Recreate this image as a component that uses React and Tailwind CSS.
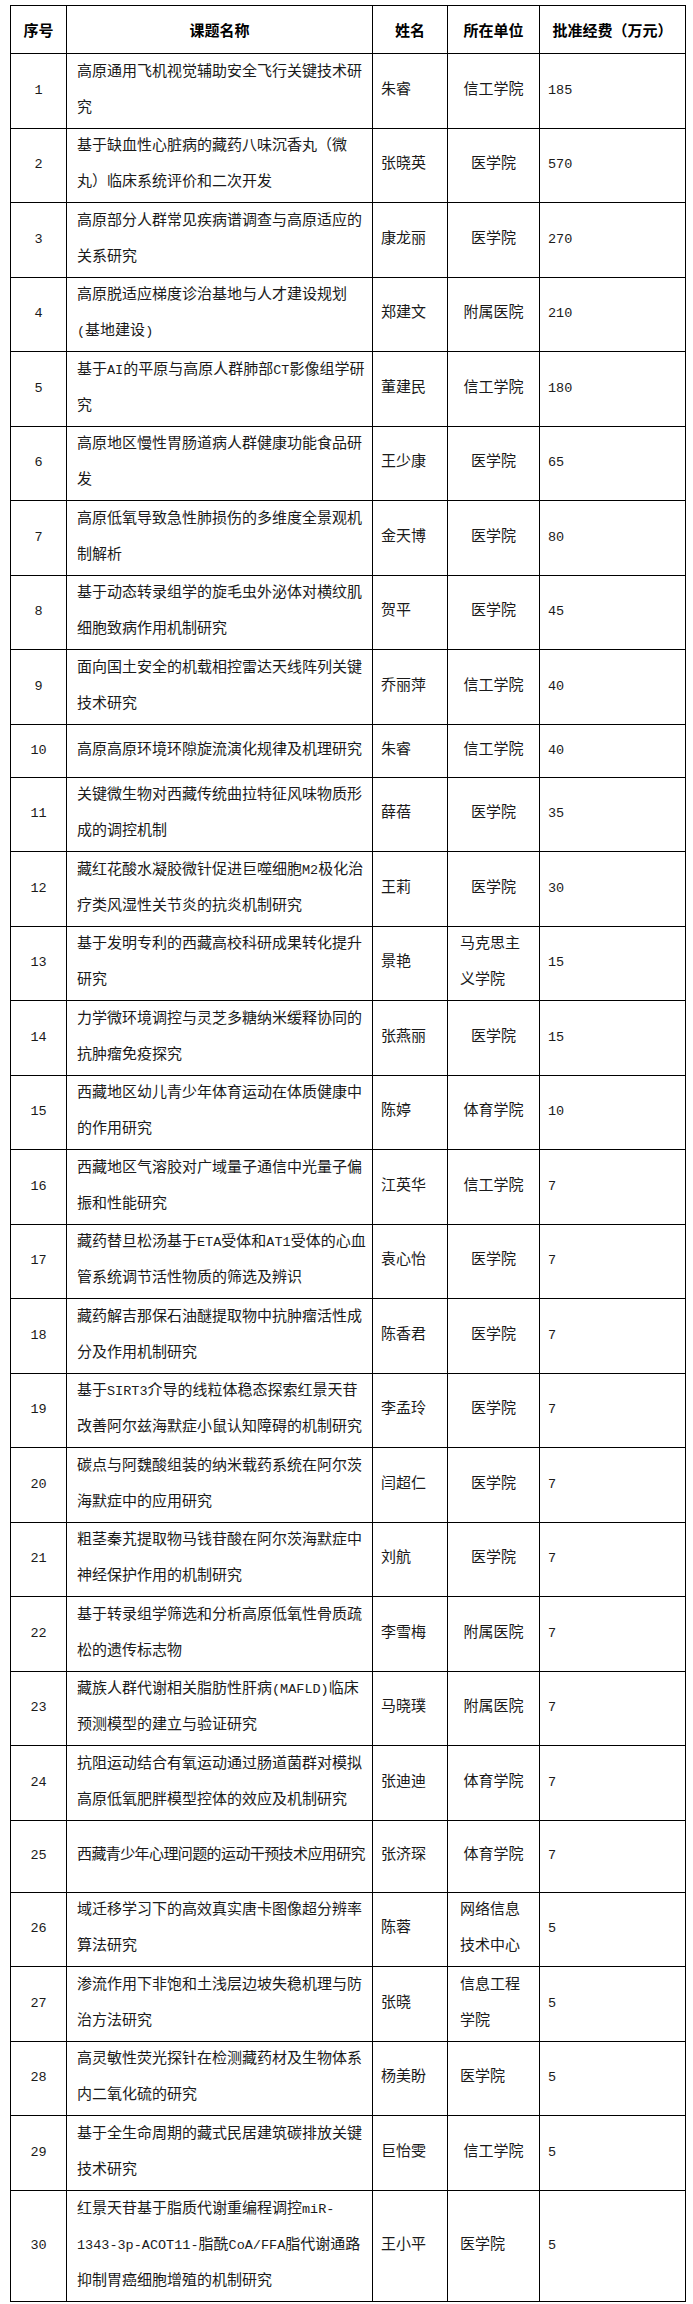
import React from "react";

const rows = [
  { n: 1, t: ["高原通用飞机视觉辅助安全飞行关键技术研", "究"], p: "朱睿", u: ["信工学院"], f: "185" },
  { n: 2, t: ["基于缺血性心脏病的藏药八味沉香丸（微", "丸）临床系统评价和二次开发"], p: "张晓英", u: ["医学院"], f: "570" },
  { n: 3, t: ["高原部分人群常见疾病谱调查与高原适应的", "关系研究"], p: "康龙丽", u: ["医学院"], f: "270" },
  { n: 4, t: ["高原脱适应梯度诊治基地与人才建设规划", "(基地建设)"], p: "郑建文", u: ["附属医院"], f: "210" },
  { n: 5, t: ["基于AI的平原与高原人群肺部CT影像组学研", "究"], p: "董建民", u: ["信工学院"], f: "180" },
  { n: 6, t: ["高原地区慢性胃肠道病人群健康功能食品研", "发"], p: "王少康", u: ["医学院"], f: "65" },
  { n: 7, t: ["高原低氧导致急性肺损伤的多维度全景观机", "制解析"], p: "金天博", u: ["医学院"], f: "80" },
  { n: 8, t: ["基于动态转录组学的旋毛虫外泌体对横纹肌", "细胞致病作用机制研究"], p: "贺平", u: ["医学院"], f: "45" },
  { n: 9, t: ["面向国土安全的机载相控雷达天线阵列关键", "技术研究"], p: "乔丽萍", u: ["信工学院"], f: "40" },
  { n: 10, t: ["高原高原环境环隙旋流演化规律及机理研究"], p: "朱睿", u: ["信工学院"], f: "40", h: "h-[53px]" },
  { n: 11, t: ["关键微生物对西藏传统曲拉特征风味物质形", "成的调控机制"], p: "薛蓓", u: ["医学院"], f: "35" },
  { n: 12, t: ["藏红花酸水凝胶微针促进巨噬细胞M2极化治", "疗类风湿性关节炎的抗炎机制研究"], p: "王莉", u: ["医学院"], f: "30" },
  { n: 13, t: ["基于发明专利的西藏高校科研成果转化提升", "研究"], p: "景艳", u: ["马克思主", "义学院"], f: "15", left: true },
  { n: 14, t: ["力学微环境调控与灵芝多糖纳米缓释协同的", "抗肿瘤免疫探究"], p: "张燕丽", u: ["医学院"], f: "15" },
  { n: 15, t: ["西藏地区幼儿青少年体育运动在体质健康中", "的作用研究"], p: "陈婷", u: ["体育学院"], f: "10" },
  { n: 16, t: ["西藏地区气溶胶对广域量子通信中光量子偏", "振和性能研究"], p: "江英华", u: ["信工学院"], f: "7" },
  { n: 17, t: ["藏药替旦松汤基于ETA受体和AT1受体的心血", "管系统调节活性物质的筛选及辨识"], p: "袁心怡", u: ["医学院"], f: "7" },
  { n: 18, t: ["藏药解吉那保石油醚提取物中抗肿瘤活性成", "分及作用机制研究"], p: "陈香君", u: ["医学院"], f: "7" },
  { n: 19, t: ["基于SIRT3介导的线粒体稳态探索红景天苷", "改善阿尔兹海默症小鼠认知障碍的机制研究"], p: "李孟玲", u: ["医学院"], f: "7" },
  { n: 20, t: ["碳点与阿魏酸组装的纳米载药系统在阿尔茨", "海默症中的应用研究"], p: "闫超仁", u: ["医学院"], f: "7" },
  { n: 21, t: ["粗茎秦艽提取物马钱苷酸在阿尔茨海默症中", "神经保护作用的机制研究"], p: "刘航", u: ["医学院"], f: "7" },
  { n: 22, t: ["基于转录组学筛选和分析高原低氧性骨质疏", "松的遗传标志物"], p: "李雪梅", u: ["附属医院"], f: "7" },
  { n: 23, t: ["藏族人群代谢相关脂肪性肝病(MAFLD)临床", "预测模型的建立与验证研究"], p: "马晓璞", u: ["附属医院"], f: "7" },
  { n: 24, t: ["抗阻运动结合有氧运动通过肠道菌群对模拟", "高原低氧肥胖模型控体的效应及机制研究"], p: "张迪迪", u: ["体育学院"], f: "7" },
  { n: 25, t: ["西藏青少年心理问题的运动干预技术应用研究"], p: "张济琛", u: ["体育学院"], f: "7", h: "h-[72px]", tight: true },
  { n: 26, t: ["域迁移学习下的高效真实唐卡图像超分辨率", "算法研究"], p: "陈蓉", u: ["网络信息", "技术中心"], f: "5", left: true },
  { n: 27, t: ["渗流作用下非饱和土浅层边坡失稳机理与防", "治方法研究"], p: "张晓", u: ["信息工程", "学院"], f: "5", left: true },
  { n: 28, t: ["高灵敏性荧光探针在检测藏药材及生物体系", "内二氧化硫的研究"], p: "杨美盼", u: ["医学院"], f: "5", left: true },
  { n: 29, t: ["基于全生命周期的藏式民居建筑碳排放关键", "技术研究"], p: "巨怡雯", u: ["信工学院"], f: "5" },
  { n: 30, t: ["红景天苷基于脂质代谢重编程调控miR-", "1343-3p-ACOT11-脂酰CoA/FFA脂代谢通路", "抑制胃癌细胞增殖的机制研究"], p: "王小平", u: ["医学院"], f: "5", left: true, h: "h-[111px]" },
];

function Mixed({ s }) {
  const parts = String(s).split(/([\x20-\x7e]+)/).filter((x) => x !== "");
  return (
    <>
      {parts.map((p, i) =>
        /^[\x20-\x7e]+$/.test(p) ? (
          <span key={i} className="text-[13.5px]">
            {p}
          </span>
        ) : (
          <span key={i}>{p}</span>
        )
      )}
    </>
  );
}

export default function App() {
  return (
    <div className="bg-white w-[693px] min-h-[2304px] pt-[5px] pl-[10px]">
      <table
        className="table-fixed border-collapse w-[675px] text-[15px] leading-[36px] text-[#1a1a1a]"
        style={{ fontFamily: '"Liberation Mono", "Noto Sans CJK SC", monospace' }}
      >
        <colgroup>
          <col className="w-[56px]" />
          <col className="w-[306px]" />
          <col className="w-[75px]" />
          <col className="w-[92px]" />
          <col className="w-[146px]" />
        </colgroup>
        <thead>
          <tr className="h-[48px] font-bold text-black" style={{ fontFamily: '"Noto Sans CJK SC", sans-serif' }}>
            <th className="border border-black text-center font-bold p-0">序号</th>
            <th className="border border-black text-center font-bold p-0">课题名称</th>
            <th className="border border-black text-center font-bold p-0">姓名</th>
            <th className="border border-black text-center font-bold p-0">所在单位</th>
            <th className="border border-black text-center font-bold p-0 whitespace-nowrap">批准经费（万元）</th>
          </tr>
        </thead>
        <tbody>
          {rows.map((r) => (
            <tr key={r.n} className={r.h || "h-[74.5px]"}>
              <td className="border border-black text-center align-middle p-0">
                <Mixed s={r.n} />
              </td>
              <td
                className={
                  "border border-black align-middle pl-[10px] pr-0 py-0 whitespace-nowrap overflow-hidden " +
                  (r.tight ? "tracking-[-0.6px]" : "")
                }
              >
                {r.t.map((l, i) => (
                  <div key={i}>
                    <Mixed s={l} />
                  </div>
                ))}
              </td>
              <td className="border border-black align-middle pl-[8px] pr-0 py-0 whitespace-nowrap">{r.p}</td>
              <td
                className={
                  "border border-black align-middle py-0 whitespace-nowrap " +
                  (r.left ? "text-left pl-[12px] pr-0" : "text-center px-0")
                }
              >
                {r.u.map((l, i) => (
                  <div key={i}>{l}</div>
                ))}
              </td>
              <td className="border border-black align-middle pl-[8px] pr-0 py-0">
                <Mixed s={r.f} />
              </td>
            </tr>
          ))}
        </tbody>
      </table>
    </div>
  );
}
